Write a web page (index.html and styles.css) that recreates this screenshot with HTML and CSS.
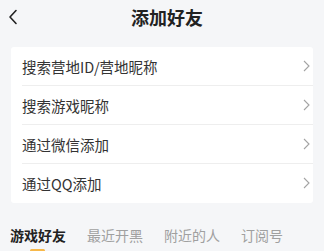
FILE: index.html
```html
<!DOCTYPE html>
<html lang="zh-CN">
<head>
    <meta charset="UTF-8">
    <meta name="viewport" content="width=device-width, initial-scale=1.0">
    <title>添加好友</title>
    <link rel="stylesheet" href="styles.css">
</head>
<body>
    <div class="header">
        <span class="back">
            <svg width="10" height="16" viewBox="0 0 10 16"><path d="M8 1.5 L2 8 L8 14.5" fill="none" stroke="#222" stroke-width="1.6" stroke-linecap="round" stroke-linejoin="round"/></svg>
        </span>
        <h1 class="title">添加好友</h1>
        <span class="spacer"></span>
    </div>

    <div class="card">
        <div class="row">
            <span>搜索营地ID/营地昵称</span>
            <svg class="arrow" width="7" height="12" viewBox="0 0 7 12"><path d="M1 1 L6 6 L1 11" fill="none" stroke="#a3a3a3" stroke-width="1.1"/></svg>
        </div>
        <div class="row">
            <span>搜索游戏昵称</span>
            <svg class="arrow" width="7" height="12" viewBox="0 0 7 12"><path d="M1 1 L6 6 L1 11" fill="none" stroke="#a3a3a3" stroke-width="1.1"/></svg>
        </div>
        <div class="row">
            <span>通过微信添加</span>
            <svg class="arrow" width="7" height="12" viewBox="0 0 7 12"><path d="M1 1 L6 6 L1 11" fill="none" stroke="#a3a3a3" stroke-width="1.1"/></svg>
        </div>
        <div class="row last">
            <span>通过QQ添加</span>
            <svg class="arrow" width="7" height="12" viewBox="0 0 7 12"><path d="M1 1 L6 6 L1 11" fill="none" stroke="#a3a3a3" stroke-width="1.1"/></svg>
        </div>
    </div>

    <div class="tabs">
        <div class="tab active">游戏好友</div>
        <div class="tab">最近开黑</div>
        <div class="tab">附近的人</div>
        <div class="tab">订阅号</div>
    </div>
</body>
</html>
```

FILE: styles.css
```css
body {
    margin: 0;
    width: 324px;
    height: 251px;
    overflow: hidden;
    background-color: #f5f6f8;
    font-family: "Noto Sans CJK SC", "Noto Sans", sans-serif;
    color: #333;
}
.header {
    display: grid;
    grid-template-columns: 30px 1fr 20px;
    align-items: center;
    height: 34px;
}
.back {
    display: flex;
    align-items: center;
    padding-left: 8px;
}
.title {
    margin: 0;
    text-align: center;
    font-size: 18px;
    font-weight: 700;
    color: #222;
}
.card {
    margin: 13px 11px 0;
    background-color: #fff;
    border-radius: 3px;
}
.row {
    display: flex;
    align-items: center;
    justify-content: space-between;
    height: 38px;
    margin-left: 11px;
    padding-right: 3px;
    border-bottom: 1px solid #eeeeee;
    font-size: 14.5px;
}
.row.last {
    border-bottom-color: transparent;
}
.tabs {
    display: flex;
    gap: 21px;
    padding-left: 10px;
    margin-top: 22px;
}
.tab {
    position: relative;
    font-size: 14px;
    line-height: 20px;
    color: #a0a0a0;
}
.tab.active {
    font-weight: 700;
    color: #222;
}
.tab.active::after {
    content: "";
    position: absolute;
    left: 50%;
    bottom: -7px;
    width: 15px;
    height: 3px;
    margin-left: -8px;
    border-radius: 2px;
    background-color: #f7b84a;
}
```
